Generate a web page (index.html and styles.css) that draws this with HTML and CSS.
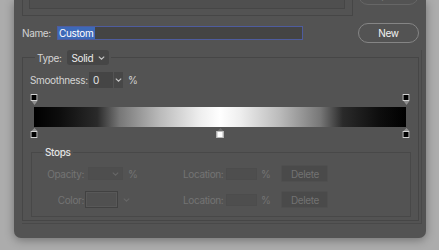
FILE: index.html
```html
<!DOCTYPE html>
<html lang="en">
<head>
  <meta charset="UTF-8">
  <meta name="viewport" content="width=device-width, initial-scale=1.0">
  <title>Gradient Editor</title>
  <link rel="stylesheet" href="styles.css">
</head>
<body>
  <div class="dialog">
    <!-- Parte de cima: lista de presets (cortada) e botao Export -->
    <div class="top">
      <div class="presets"><div class="presets-inner"></div></div>
      <button class="pill export" disabled>Export...</button>
    </div>

    <div class="name-row">
      <span class="name-label">Name:</span>
      <div class="name-input"><span class="selected">Custom</span></div>
      <button class="pill new">New</button>
    </div>

    <div class="frame">
      <fieldset class="group">
        <legend class="group-legend">
          <span class="label">Type:</span>
          <span class="select">Solid
            <svg class="chev" width="7" height="4" viewBox="0 0 7 4"><path d="M0.8 0.6l2.7 2.6 2.7-2.6" fill="none" stroke="currentColor" stroke-width="1.1"/></svg>
          </span>
        </legend>

        <div class="smooth-row">
          <span class="label smooth-label">Smoothness:</span>
          <span class="num-input">0</span>
          <span class="num-arrow">
            <svg class="chev" width="7" height="4" viewBox="0 0 7 4"><path d="M0.8 0.6l2.7 2.6 2.7-2.6" fill="none" stroke="currentColor" stroke-width="1.1"/></svg>
          </span>
          <span class="label pct">%</span>
        </div>

        <!-- Barra do gradiente com as paradas -->
        <div class="gradient">
          <div class="stop-row">
            <div class="stop top-stop" style="left: 0%"><span class="box black"></span><span class="tri down"></span></div>
            <div class="stop top-stop" style="left: 100%"><span class="box black"></span><span class="tri down"></span></div>
          </div>
          <div class="bar"></div>
          <div class="stop-row bottom">
            <div class="stop" style="left: 0%"><span class="tri up"></span><span class="box black"></span></div>
            <div class="stop" style="left: 50%"><span class="tri up faint"></span><span class="box white"></span></div>
            <div class="stop" style="left: 100%"><span class="tri up"></span><span class="box black"></span></div>
          </div>
        </div>

        <fieldset class="stops">
          <legend class="stops-legend">Stops</legend>
          <div class="stop-field">
            <div class="cell">
              <span class="off-label">Opacity:</span>
              <span class="off-select">
                <svg class="chev" width="7" height="4" viewBox="0 0 7 4"><path d="M0.8 0.6l2.7 2.6 2.7-2.6" fill="none" stroke="currentColor" stroke-width="1.1"/></svg>
              </span>
              <span class="off pct">%</span>
            </div>
            <span class="off loc-label">Location:</span>
            <span class="off-input"></span>
            <span class="off pct loc-pct">%</span>
            <button class="delete" disabled>Delete</button>
          </div>
          <div class="stop-field">
            <div class="cell">
              <span class="off-label">Color:</span>
              <span class="swatch"></span>
              <svg class="chev off swatch-chev" width="7" height="4" viewBox="0 0 7 4"><path d="M0.8 0.6l2.7 2.6 2.7-2.6" fill="none" stroke="currentColor" stroke-width="1.1"/></svg>
            </div>
            <span class="off loc-label">Location:</span>
            <span class="off-input"></span>
            <span class="off pct loc-pct">%</span>
            <button class="delete" disabled>Delete</button>
          </div>
        </fieldset>
      </fieldset>
    </div>
  </div>
</body>
</html>
```

FILE: styles.css
```css
html, body {
  margin: 0;
  padding: 0;
}
body {
  font-family: Inter, "Noto Sans", sans-serif;
  font-size: 10px;
  letter-spacing: -0.35px;
  background-color: #acacac;
  width: 439px;
  height: 250px;
  overflow: hidden;
}
.dialog {
  margin-left: 14px;
  width: 412px;
  box-sizing: border-box;
  padding: 0 4px 14px 8px;
  background: #535353;
  border-radius: 0 0 7px 7px;
  box-shadow: 0 2px 10px rgba(0, 0, 0, 0.35);
}
button {
  font-family: inherit;
  letter-spacing: inherit;
  padding: 0;
}

/* Topo */
.top {
  display: flex;
  align-items: flex-start;
  height: 16px;
}
.presets {
  margin-top: -20px;
  width: 331px;
  box-sizing: border-box;
  padding: 0 7px 6px 6px;
  border: 1px solid #464646;
}
.presets-inner {
  height: 28px;
  box-sizing: border-box;
  border: 1px solid #464646;
  background: #4f4f4f;
}
.pill {
  width: 61px;
  height: 20px;
  border-radius: 10px;
  background: transparent;
  font-size: 10px;
}
.export {
  margin: -15px 3px 0 auto;
  border: 1px solid #666;
  color: #777;
}

/* Nome */
.name-row {
  display: flex;
  align-items: center;
  margin-top: 7px;
  height: 20px;
}
.name-label {
  width: 35px;
  color: #d4d4d4;
}
.name-input {
  width: 246px;
  height: 14px;
  box-sizing: border-box;
  border: 1px solid #4e5c9e;
  background: #444;
  display: flex;
  align-items: stretch;
}
.selected {
  background: #3d69b8;
  color: #fff;
  padding: 0 2px 0 1px;
  line-height: 12px;
}
.new {
  margin: 0 3px 0 auto;
  border: 1px solid #858585;
  color: #f2f2f2;
}

/* Grupo principal */
.frame {
  margin-top: 7px;
  padding: 0 2px 2px 0;
  border-right: 1px solid #494949;
  border-bottom: 1px solid #494949;
}
.group {
  margin: 0;
  padding: 0 0 3px 7px;
  border: 1px solid #464646;
  min-width: 0;
}
.group-legend {
  display: flex;
  align-items: center;
  margin-left: 5px;
  padding: 0 2px;
  height: 15px;
}
.label {
  color: #d4d4d4;
}
.select {
  display: flex;
  align-items: center;
  margin-left: 5px;
  height: 15px;
  padding: 0 4px 0 5px;
  background: #464646;
  border-radius: 3px;
  color: #ececec;
}
.select .chev {
  margin-left: 5px;
  color: #c8c8c8;
}

.smooth-row {
  display: flex;
  align-items: center;
  margin-top: 7px;
  height: 16px;
}
.smooth-label {
  width: 59px;
}
.num-input {
  width: 24px;
  height: 16px;
  box-sizing: border-box;
  padding-left: 4px;
  line-height: 16px;
  background: #454545;
  color: #e6e6e6;
}
.num-arrow {
  margin-left: 1px;
  width: 9px;
  height: 16px;
  display: flex;
  align-items: center;
  justify-content: center;
  background: #474747;
  color: #c8c8c8;
}
.pct {
  margin-left: 5px;
}

/* Gradiente */
.gradient {
  margin: 6px 0 0 4px;
  width: 372px;
}
.stop-row {
  position: relative;
  height: 12px;
}
.stop-row.bottom {
  height: 11px;
  margin-top: 1px;
}
.bar {
  margin-top: 1px;
  height: 20px;
  background: linear-gradient(to right, #000 0%, #0d0d0d 7%, #2a2a2a 17%, #777 23%, #999 28.5%, #bbb 34%, #eee 44.5%, #fff 50%, #eee 55.5%, #bbb 66%, #999 71.5%, #777 77%, #2a2a2a 83%, #0d0d0d 93%, #000 100%);
}
.stop {
  position: absolute;
  top: 0;
  display: flex;
  flex-direction: column;
  align-items: center;
  transform: translateX(-50%);
}
.box {
  width: 7px;
  height: 7px;
  box-sizing: border-box;
  border: 1px solid #d0d0d0;
}
.box.black {
  background: #000;
}
.box.white {
  background: #fff;
  border-color: #bbb;
}
.tri {
  width: 0;
  height: 0;
  border-left: 3px solid transparent;
  border-right: 3px solid transparent;
}
.tri.down {
  border-top: 4px solid #8e8e8e;
}
.tri.up {
  border-bottom: 3px solid #8e8e8e;
}
.tri.up.faint {
  border-bottom-color: #6c6c6c;
}

/* Paradas */
.stops {
  margin: 6px 7px 0 1px;
  padding: 0 0 8px 0;
  border: 1px solid #484848;
  min-width: 0;
}
.stops-legend {
  margin-left: 11px;
  padding: 0 2px;
  height: 14px;
  line-height: 14px;
  color: #e4e4e4;
  font-weight: 500;
}
.stop-field {
  display: flex;
  align-items: center;
  height: 17px;
  margin-top: 6px;
  color: #747474;
}
.stop-field + .stop-field {
  margin-top: 9px;
}
.cell {
  display: flex;
  align-items: center;
  width: 151px;
}
.off-label {
  width: 52px;
  text-align: right;
}
.off-select {
  margin-left: 4px;
  width: 35px;
  height: 13px;
  box-sizing: border-box;
  border: 1px solid #4d4d4d;
  background: #4e4e4e;
  display: flex;
  align-items: center;
  justify-content: flex-end;
  padding-right: 3px;
  color: #666;
}
.swatch {
  margin-left: 1px;
  width: 33px;
  height: 17px;
  box-sizing: border-box;
  border: 1px solid #414141;
  background: #505050;
  box-shadow: inset 0 0 0 1px #585858;
}
.swatch-chev {
  margin-left: 5px;
  color: #666;
}
.loc-label {
  width: 39px;
}
.off-input {
  margin-left: 4px;
  width: 31px;
  height: 12px;
  box-sizing: border-box;
  border: 1px solid #4c4c4c;
  background: #4e4e4e;
}
.loc-pct {
  margin-left: 4px;
}
.delete {
  margin-left: 11px;
  width: 47px;
  height: 17px;
  border: 1px solid #4f4f4f;
  border-radius: 2px;
  background: #4a4a4a;
  color: #727272;
  font-size: 10px;
}
```
